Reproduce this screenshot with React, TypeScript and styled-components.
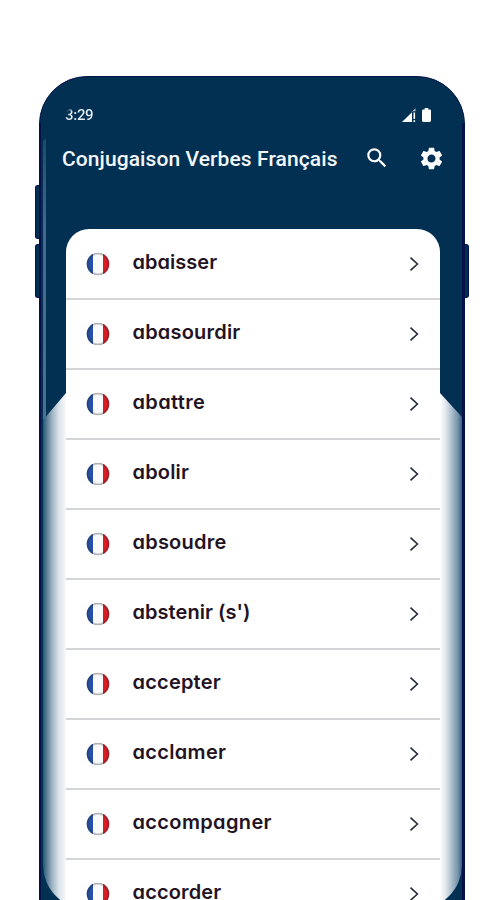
import React from 'react';
import styled, { createGlobalStyle } from 'styled-components';

const navy = '#023053';
const edge = '#06104a';

const GlobalStyle = createGlobalStyle`
  * { box-sizing: border-box; }
  html, body { margin: 0; height: 900px; overflow: hidden; background: #fff; }
`;

const Page = styled.main`
  width: 503px;
  height: 900px;
  padding: 76px 38px 0 39px;
  overflow: hidden;
  background: #fff;
`;

const Phone = styled.div`
  position: relative;
  width: 426px;
  height: 880px;
  padding: 0 25px 0 27px;
  border: 1px solid ${edge};
  border-radius: 48px 48px 0 0;
  background: ${navy};
`;

const SideButton = styled.span<{ $side: 'left' | 'right'; $top: number; $height: number }>`
  position: absolute;
  ${p => p.$side}: -5px;
  top: ${p => p.$top}px;
  width: 5px;
  height: ${p => p.$height}px;
  background: ${navy};
  border: 1px solid ${edge};
  border-width: ${p => (p.$side === 'left' ? '1px 0 1px 1px' : '1px 1px 1px 0')};
  border-radius: ${p => (p.$side === 'left' ? '3px 0 0 3px' : '0 3px 3px 0')};
`;

const Glint = styled.span`
  position: absolute;
  left: 3px;
  top: 62px;
  width: 3px;
  height: 290px;
  border-radius: 3px 0 0 0;
  background: linear-gradient(180deg, #1d4a6b, #45698a 30%, #49708f);
`;

const ScreenGlow = styled.div`
  position: absolute;
  left: 3px;
  top: 316px;
  width: 419px;
  height: 516px;
  border-radius: 0 0 44px 44px;
  clip-path: polygon(23px 0, 397px 0, 419px 24px, 419px 100%, 0 100%, 0 27px);
  background: linear-gradient(
    90deg,
    #285474 0, #5b7f98 4px, #9db3c2 9px, #dce4ea 16px, #fff 25px,
    #fff 397px, #dfe5ec 403px, #a8bccb 409px, #7393a9 415px, #365f7e 419px
  );
`;

const RightRim = styled.span`
  position: absolute;
  right: -1px;
  top: 46px;
  width: 3px;
  height: 834px;
  background: ${edge};
`;

const LeftRim = styled(RightRim)`
  right: auto;
  left: -1px;
  width: 2px;
`;

const StatusBar = styled.div`
  display: flex;
  align-items: center;
  justify-content: space-between;
  height: 76px;
  padding: 0 8px 0 0;
  margin-left: -2px;
`;

const Clock = styled.span`
  font: 500 15px/18px Roboto, sans-serif;
  letter-spacing: -0.3px;
  color: transparent;
  background: linear-gradient(125deg, ${navy} 4px, #e9f0f5 9px);
  background-clip: text;
  -webkit-background-clip: text;
`;

const StatusIcons = styled.div`
  display: flex;
  align-items: center;
  gap: 6px;
`;

const AppBar = styled.header`
  display: flex;
  align-items: center;
  height: 76px;
  margin: -12px -6px 0 -5px;
  padding-bottom: 42px;
`;

const Title = styled.h1`
  flex: 1;
  margin: 2px 0 0;
  font: 500 21px/30px Roboto, sans-serif;
  letter-spacing: 0.09px;
  white-space: nowrap;
  color: #f4f7fa;
`;

const IconButton = styled.button`
  display: flex;
  padding: 0;
  border: 0;
  background: none;
  color: #fff;
  & + & { margin-left: 28px; }
`;

const Card = styled.ul`
  width: 374px;
  height: 760px;
  position: relative;
  margin: 12px 0 0 -1px;
  padding: 1px 0 0;
  list-style: none;
  border-radius: 23px 23px 0 0;
  background: #fff;
  overflow: hidden;
`;

const Row = styled.li`
  display: flex;
  align-items: center;
  height: 70.05px;
  padding: 0 20px;
  border-bottom: 2px solid #d3d5d6;
`;

const Word = styled.span<{ $spacing: number }>`
  flex: 1;
  margin: -4px 0 0 22.5px;
  font: 600 20px/28px Inter, sans-serif;
  font-feature-settings: 'cv11' 1;
  letter-spacing: ${p => p.$spacing}px;
  white-space: nowrap;
  color: #231323;
`;

const Flag = () => (
  <svg width="24" height="24" viewBox="0 0 24 24">
    <defs>
      <clipPath id="disc"><circle cx="12" cy="12" r="11.3" /></clipPath>
      <radialGradient id="shade">
        <stop offset=".75" stopColor="#222" stopOpacity="0" />
        <stop offset="1" stopColor="#222" stopOpacity=".5" />
      </radialGradient>
    </defs>
    <g clipPath="url(#disc)">
      <path fill="#fafafa" d="M0 0h24v24H0z" />
      <path fill="#2650a8" d="M0 0h7v24H0z" />
      <path fill="#db1c25" d="M17 0H24v24h-7z" />
      <circle cx="12" cy="12" r="11.5" fill="url(#shade)" />
    </g>
  </svg>
);

const Chevron = () => (
  <svg width="11" height="16" viewBox="0 0 11 16">
    <path d="M1.500 1.700 8.400 8 1.500 14.300" fill="none" stroke="#242b38" strokeWidth="1.600" />
  </svg>
);

const Signal = () => (
  <svg width="14" height="14" viewBox="0 0 14 14" fill="#fff">
    <path d="M0 14 10 4.300V14z" />
    <path d="M9 4.500 13.500.3v3h-2.500z" opacity=".7" />
    <path d="M11.500 4.500h1.600V11h-1.600zM11.500 12.200h1.600V14h-1.600z" />
  </svg>
);

const Battery = () => (
  <svg width="9" height="14" viewBox="0 0 10 15" preserveAspectRatio="none">
    <path fill="#fff" d="M3 0h4v1.500h1.500Q10 1.500 10 3v10.500Q10 15 8.500 15h-7Q0 15 0 13.500V3q0-1.500 1.500-1.500H3z" />
  </svg>
);

const SearchIcon = () => (
  <svg width="26" height="26" viewBox="0 0 24 24" fill="currentColor">
    <path d="M15.500 14h-.79l-.28-.27A6.470 6.470 0 0 0 16 9.500 6.500 6.500 0 1 0 9.500 16c1.610 0 3.090-.59 4.230-1.570l.27.28v.79l5 4.990L20.490 19zM9.500 14a4.500 4.500 0 1 1 0-9 4.500 4.500 0 0 1 0 9z" />
  </svg>
);

const GearIcon = () => (
  <svg width="27" height="27" viewBox="0 0 24 24" fill="currentColor">
    <path d="M19.140 12.940c.04-.3.06-.61.06-.94 0-.32-.02-.64-.07-.94l2.030-1.580c.18-.14.23-.41.12-.61l-1.920-3.320c-.12-.22-.37-.29-.59-.22l-2.390.96c-.5-.38-1.030-.7-1.620-.94l-.36-2.540c-.04-.24-.24-.41-.48-.41h-3.840c-.24 0-.43.17-.47.41l-.36 2.540c-.59.24-1.130.57-1.620.94l-2.390-.96c-.22-.08-.47 0-.59.22L2.740 8.870c-.12.21-.08.47.12.61l2.030 1.580c-.05.3-.09.63-.09.94s.02.64.07.94l-2.030 1.580c-.18.14-.23.41-.12.61l1.920 3.320c.12.22.37.29.59.22l2.390-.96c.5.38 1.030.7 1.620.94l.36 2.540c.05.24.24.41.48.41h3.840c.24 0 .44-.17.47-.41l.36-2.540c.59-.24 1.130-.56 1.620-.94l2.390.96c.22.08.47 0 .59-.22l1.920-3.320c.12-.22.07-.47-.12-.61zM12 15.600A3.610 3.610 0 0 1 8.400 12c0-1.980 1.620-3.600 3.600-3.600s3.600 1.620 3.600 3.600-1.620 3.600-3.600 3.600z" />
  </svg>
);

const verbs: { name: string; spacing: number }[] = [
  { name: 'abaisser', spacing: 0.03 },
  { name: 'abasourdir', spacing: 0.2 },
  { name: 'abattre', spacing: 0.35 },
  { name: 'abolir', spacing: 0.17 },
  { name: 'absoudre', spacing: 0.22 },
  { name: "abstenir (s')", spacing: 0.05 },
  { name: 'accepter', spacing: 0.2 },
  { name: 'acclamer', spacing: 0.32 },
  { name: 'accompagner', spacing: 0.36 },
  { name: 'accorder', spacing: 0.15 },
];

export default function App() {
  return (
    <Page>
      <GlobalStyle />
      <Phone>
        <SideButton $side="left" $top={108} $height={54} />
        <SideButton $side="left" $top={167} $height={54} />
        <SideButton $side="right" $top={167} $height={54} />
        <Glint />
        <ScreenGlow />
        <LeftRim />
        <RightRim />
        <StatusBar>
          <Clock>3:29</Clock>
          <StatusIcons>
            <Signal />
            <Battery />
          </StatusIcons>
        </StatusBar>
        <AppBar>
          <Title>Conjugaison Verbes Français</Title>
          <IconButton aria-label="Rechercher"><SearchIcon /></IconButton>
          <IconButton aria-label="Paramètres"><GearIcon /></IconButton>
        </AppBar>
        <Card>
          {verbs.map(v => (
            <Row key={v.name}>
              <Flag />
              <Word $spacing={v.spacing}>{v.name}</Word>
              <Chevron />
            </Row>
          ))}
        </Card>
      </Phone>
    </Page>
  );
}
